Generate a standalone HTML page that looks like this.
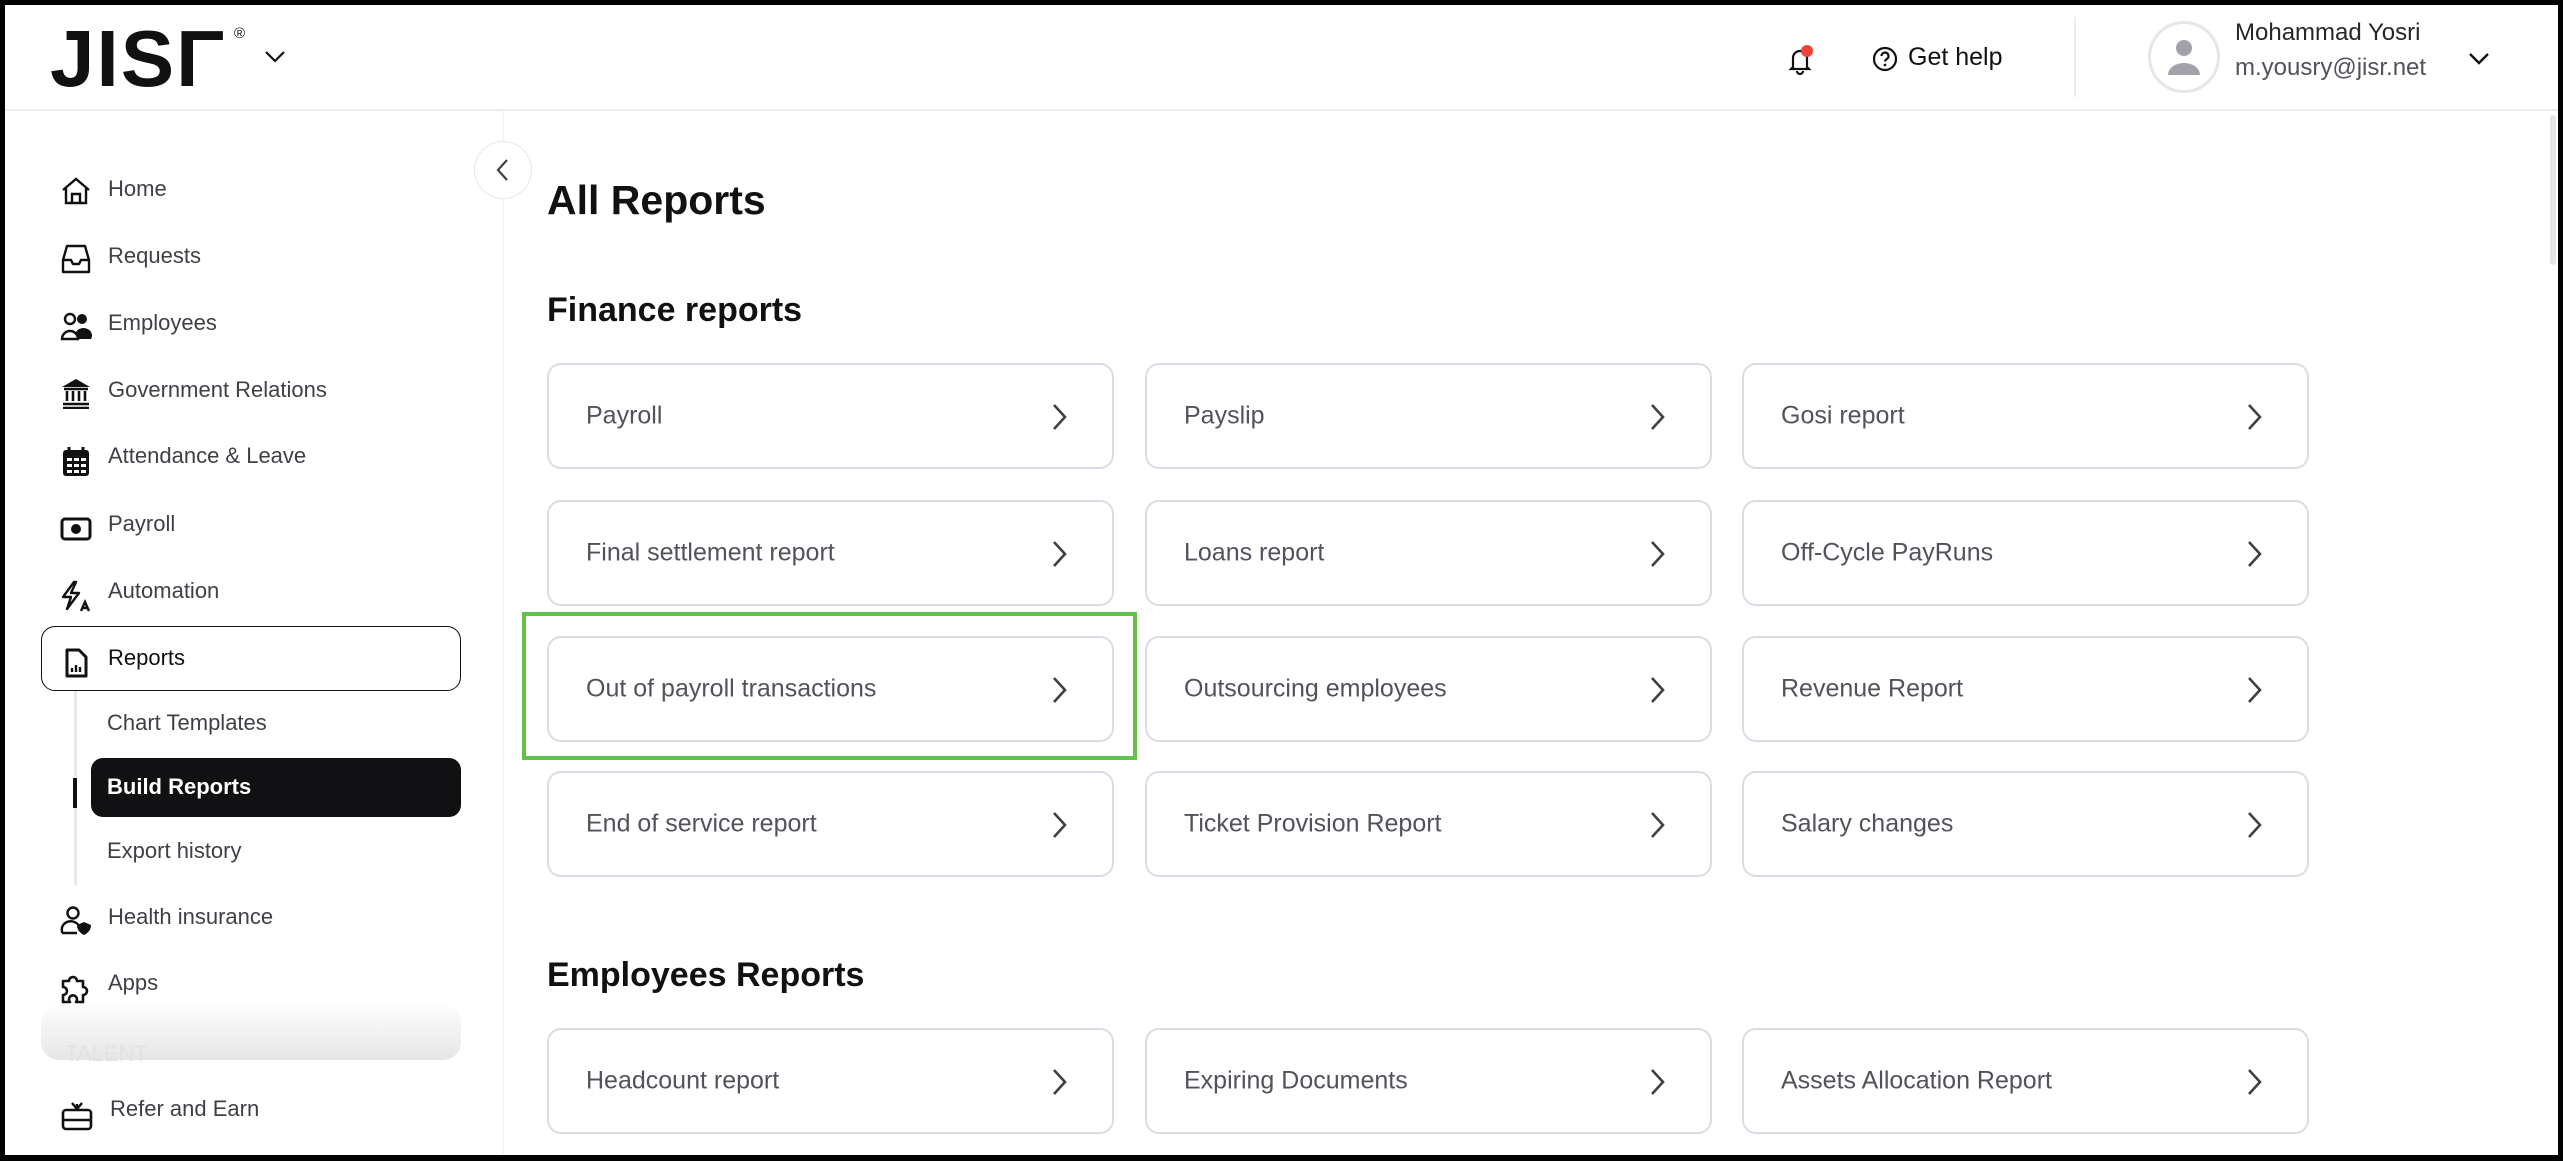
<!DOCTYPE html>
<html><head><meta charset="utf-8"><style>
*{box-sizing:border-box;margin:0;padding:0}
body{width:2563px;height:1161px;overflow:hidden;background:#000;font-family:"Liberation Sans",sans-serif;position:relative}
#page{position:absolute;left:5px;top:5px;width:2553px;height:1150px;background:#fff;overflow:hidden}
.a{position:absolute}
.hdr{left:0;top:0;width:2553px;height:106px;border-bottom:2px solid #ececf0}
.nav{position:absolute;left:103px;font-size:22px;color:#3f3f46;line-height:1;margin-top:-4px}
.ic{position:absolute;left:55px;width:32px;height:32px}
.card{position:absolute;width:567px;height:106px;border:2.5px solid #dcdce6;border-radius:14px;background:#fff}
.card span{position:absolute;left:37px;top:50%;transform:translateY(-50%);font-size:25px;color:#52525b}
.card svg{position:absolute;right:44px;top:38px}
h1{position:absolute;left:542px;top:172px;font-size:41px;font-weight:600;color:#111114}
h2{position:absolute;font-size:34px;font-weight:600;color:#111114;left:542px}
</style></head><body><div id="page">
<div class="a hdr"></div>
<!-- logo -->
<div class="a" style="left:45px;top:14px;font-size:80px;font-weight:700;letter-spacing:2px;color:#111;line-height:1;font-family:'Liberation Sans',sans-serif">JISΓ</div>
<div class="a" style="left:229px;top:20px;font-size:15px;color:#111">®</div>
<svg class="a" style="left:258px;top:44px" width="24" height="16" viewBox="0 0 24 16"><path d="M3 3l9 9 9-9" fill="none" stroke="#111" stroke-width="2.2"/></svg>
<!-- header right -->
<svg class="a" style="left:1780px;top:38px" width="30" height="34" viewBox="0 0 30 34"><path d="M8 24V15a7 7 0 0114 0v9l2 2H6z M12 28a3 3 0 006 0" fill="none" stroke="#111" stroke-width="2.2"/><circle cx="22" cy="8" r="6" fill="#ef4136"/></svg>
<svg class="a" style="left:1866px;top:40px" width="28" height="28" viewBox="0 0 28 28"><circle cx="14" cy="14" r="11" fill="none" stroke="#111" stroke-width="2.2"/><path d="M10.5 11a3.5 3.5 0 116 2.5c-1.5 1-2.5 1.5-2.5 3" fill="none" stroke="#111" stroke-width="2.2"/><circle cx="14" cy="20" r="1.4" fill="#111"/></svg>
<div class="a" style="left:1903px;top:38px;font-size:25px;color:#111">Get help</div>
<div class="a" style="left:2069px;top:12px;width:2px;height:80px;background:#ececf0"></div>
<div class="a" style="left:2143px;top:16px;width:72px;height:72px;border-radius:50%;border:3px solid #e5e5ea;background:#fff"></div>
<svg class="a" style="left:2160px;top:32px" width="38" height="40" viewBox="0 0 38 40"><circle cx="19" cy="11" r="8" fill="#a1a1aa"/><path d="M3 38a16 12 0 0132 0z" fill="#a1a1aa"/></svg>
<div class="a" style="left:2230px;top:14px;font-size:24px;color:#27272a">Mohammad Yosri</div>
<div class="a" style="left:2230px;top:49px;font-size:24px;color:#52525b">m.yousry@jisr.net</div>
<svg class="a" style="left:2462px;top:46px" width="24" height="16" viewBox="0 0 24 16"><path d="M3 3l9 9 9-9" fill="none" stroke="#111" stroke-width="2.4"/></svg>
<!-- scrollbar -->
<div class="a" style="left:2545px;top:110px;width:6px;height:150px;background:#e4e4e7;border-radius:3px"></div>
<!-- sidebar -->
<div class="a" style="left:498px;top:106px;width:1px;height:1044px;background:#f0f0f3"></div>
<div class="a" style="left:469px;top:136px;width:58px;height:58px;border-radius:50%;border:1.5px solid #e6e6ec;background:#fff"></div>
<svg class="a" style="left:488px;top:151px" width="20" height="28" viewBox="0 0 20 28"><path d="M14 4L5 14l9 10" fill="none" stroke="#3f3f46" stroke-width="2.2"/></svg>

<svg class="ic" style="top:170px" viewBox="0 0 32 32"><path d="M3 15L16 4l13 11M6 13v15h20V13M12 28v-9h8v9" fill="none" stroke="#111" stroke-width="2.4"/></svg>
<div class="nav" style="top:177px">Home</div>
<svg class="ic" style="top:238px" viewBox="0 0 32 32"><path d="M7 3h18l4 14v12H3V17zM3 17h8l2 4h6l2-4h8" fill="none" stroke="#111" stroke-width="2.4" stroke-linejoin="round"/></svg>
<div class="nav" style="top:244px">Requests</div>
<svg class="ic" style="top:305px" viewBox="0 0 32 32"><circle cx="10" cy="9" r="5" fill="none" stroke="#111" stroke-width="2.4"/><circle cx="22" cy="9" r="5" fill="#111"/><path d="M2 29a8 8 0 0116 0z" fill="none" stroke="#111" stroke-width="2.4"/><path d="M16 22a8 7 0 0115 7H18z" fill="#111"/></svg>
<div class="nav" style="top:311px">Employees</div>
<svg class="ic" style="top:372px" viewBox="0 0 32 32"><path d="M16 2L2 10h28z" fill="#111"/><path d="M4 12h24M7 14v10M13 14v10M19 14v10M25 14v10M3 27h26M3 31h26" stroke="#111" stroke-width="2.6"/></svg>
<div class="nav" style="top:378px">Government Relations</div>
<svg class="ic" style="top:440px" viewBox="0 0 32 32"><rect x="3" y="5" width="26" height="26" rx="3" fill="#111"/><path d="M9 2v6M23 2v6" stroke="#111" stroke-width="3"/><g fill="#fff"><rect x="7" y="13" width="5" height="3"/><rect x="14" y="13" width="5" height="3"/><rect x="21" y="13" width="5" height="3"/><rect x="7" y="19" width="5" height="3"/><rect x="14" y="19" width="5" height="3"/><rect x="21" y="19" width="5" height="3"/><rect x="7" y="25" width="5" height="3"/><rect x="14" y="25" width="5" height="3"/><rect x="21" y="25" width="5" height="3"/></g></svg>
<div class="nav" style="top:444px">Attendance &amp; Leave</div>
<svg class="ic" style="top:508px" viewBox="0 0 32 32"><rect x="2" y="6" width="28" height="20" rx="3" fill="none" stroke="#111" stroke-width="3"/><circle cx="16" cy="16" r="5" fill="#111"/></svg>
<div class="nav" style="top:512px">Payroll</div>
<svg class="ic" style="top:575px" viewBox="0 0 32 32"><path d="M14 2L3 17h8l-4 12 12-16h-8l5-11z" fill="none" stroke="#111" stroke-width="2.4" stroke-linejoin="round"/><path d="M21 31l4-9 4 9M22.5 28h5" stroke="#111" stroke-width="2.4" fill="none"/></svg>
<div class="nav" style="top:579px">Automation</div>
<div class="a" style="left:36px;top:621px;width:420px;height:65px;border:1.5px solid #111;border-radius:14px"></div>
<svg class="ic" style="top:642px" viewBox="0 0 32 32"><path d="M7 3h12l7 7v19H7z" fill="none" stroke="#111" stroke-width="3" stroke-linejoin="round"/><path d="M12 25v-4M16 25v-7M20 25v-5" stroke="#111" stroke-width="2.4"/></svg>
<div class="nav" style="top:646px;color:#111">Reports</div>
<div class="a" style="left:69px;top:686px;width:3px;height:194px;background:#e9e9ec"></div>
<div class="a" style="left:68px;top:773px;width:4px;height:30px;background:#111"></div>
<div class="nav" style="top:711px;left:102px">Chart Templates</div>
<div class="a" style="left:86px;top:753px;width:370px;height:59px;background:#111114;border-radius:12px"></div>
<div class="nav" style="top:775px;left:102px;color:#fff;font-weight:700">Build Reports</div>
<div class="nav" style="top:839px;left:102px">Export history</div>
<svg class="ic" style="top:900px" viewBox="0 0 32 32"><circle cx="13" cy="8" r="5.5" fill="none" stroke="#111" stroke-width="2.4"/><path d="M2 28v-2a9 8 0 0117-5M2 28h15" fill="none" stroke="#111" stroke-width="2.4"/><path d="M24 17l7 3c0 5-3 8-7 10-4-2-7-5-7-10z" fill="#111"/></svg>
<div class="nav" style="top:905px">Health insurance</div>
<svg class="ic" style="top:967px" viewBox="0 0 32 32"><path d="M3 9h6a4 4 0 118 0h6v6a4 4 0 110 8v7h-7a4 4 0 10-6 0H3v-7a4 4 0 100-8z" fill="none" stroke="#111" stroke-width="2.6" stroke-linejoin="round"/></svg>
<div class="nav" style="top:971px">Apps</div>
<div class="a" style="left:36px;top:1000px;width:420px;height:55px;border-radius:18px;background:linear-gradient(#fdfdfd,#e6e6e8)"></div>
<div class="a" style="left:60px;top:1036px;font-size:22px;color:#e2e2e4">TALENT</div>
<svg class="ic" style="top:1094px;left:56px" viewBox="0 0 32 32"><rect x="2" y="11" width="28" height="19" rx="3" fill="none" stroke="#111" stroke-width="2.6"/><path d="M2 21h28M11 4l5 6 5-6M16 10V5" fill="none" stroke="#111" stroke-width="2.4"/></svg>
<div class="nav" style="top:1097px;left:105px">Refer and Earn</div>

<!-- main -->
<h1>All Reports</h1>
<h2 style="top:286px">Finance reports</h2>
<h2 style="top:951px">Employees Reports</h2>
<div class="a" style="left:517px;top:607px;width:615px;height:148px;border:4px solid #62c24a"></div>

<div class="card" style="left:542px;top:358px"><span>Payroll</span><svg width="16" height="28" viewBox="0 0 16 28"><path d="M2 2l11 12L2 26" fill="none" stroke="#3f3f46" stroke-width="2.6"/></svg></div>
<div class="card" style="left:1140px;top:358px"><span>Payslip</span><svg width="16" height="28" viewBox="0 0 16 28"><path d="M2 2l11 12L2 26" fill="none" stroke="#3f3f46" stroke-width="2.6"/></svg></div>
<div class="card" style="left:1737px;top:358px"><span>Gosi report</span><svg width="16" height="28" viewBox="0 0 16 28"><path d="M2 2l11 12L2 26" fill="none" stroke="#3f3f46" stroke-width="2.6"/></svg></div>

<div class="card" style="left:542px;top:495px"><span>Final settlement report</span><svg width="16" height="28" viewBox="0 0 16 28"><path d="M2 2l11 12L2 26" fill="none" stroke="#3f3f46" stroke-width="2.6"/></svg></div>
<div class="card" style="left:1140px;top:495px"><span>Loans report</span><svg width="16" height="28" viewBox="0 0 16 28"><path d="M2 2l11 12L2 26" fill="none" stroke="#3f3f46" stroke-width="2.6"/></svg></div>
<div class="card" style="left:1737px;top:495px"><span>Off-Cycle PayRuns</span><svg width="16" height="28" viewBox="0 0 16 28"><path d="M2 2l11 12L2 26" fill="none" stroke="#3f3f46" stroke-width="2.6"/></svg></div>

<div class="card" style="left:542px;top:631px"><span>Out of payroll transactions</span><svg width="16" height="28" viewBox="0 0 16 28"><path d="M2 2l11 12L2 26" fill="none" stroke="#3f3f46" stroke-width="2.6"/></svg></div>
<div class="card" style="left:1140px;top:631px"><span>Outsourcing employees</span><svg width="16" height="28" viewBox="0 0 16 28"><path d="M2 2l11 12L2 26" fill="none" stroke="#3f3f46" stroke-width="2.6"/></svg></div>
<div class="card" style="left:1737px;top:631px"><span>Revenue Report</span><svg width="16" height="28" viewBox="0 0 16 28"><path d="M2 2l11 12L2 26" fill="none" stroke="#3f3f46" stroke-width="2.6"/></svg></div>

<div class="card" style="left:542px;top:766px"><span>End of service report</span><svg width="16" height="28" viewBox="0 0 16 28"><path d="M2 2l11 12L2 26" fill="none" stroke="#3f3f46" stroke-width="2.6"/></svg></div>
<div class="card" style="left:1140px;top:766px"><span>Ticket Provision Report</span><svg width="16" height="28" viewBox="0 0 16 28"><path d="M2 2l11 12L2 26" fill="none" stroke="#3f3f46" stroke-width="2.6"/></svg></div>
<div class="card" style="left:1737px;top:766px"><span>Salary changes</span><svg width="16" height="28" viewBox="0 0 16 28"><path d="M2 2l11 12L2 26" fill="none" stroke="#3f3f46" stroke-width="2.6"/></svg></div>

<div class="card" style="left:542px;top:1023px"><span>Headcount report</span><svg width="16" height="28" viewBox="0 0 16 28"><path d="M2 2l11 12L2 26" fill="none" stroke="#3f3f46" stroke-width="2.6"/></svg></div>
<div class="card" style="left:1140px;top:1023px"><span>Expiring Documents</span><svg width="16" height="28" viewBox="0 0 16 28"><path d="M2 2l11 12L2 26" fill="none" stroke="#3f3f46" stroke-width="2.6"/></svg></div>
<div class="card" style="left:1737px;top:1023px"><span>Assets Allocation Report</span><svg width="16" height="28" viewBox="0 0 16 28"><path d="M2 2l11 12L2 26" fill="none" stroke="#3f3f46" stroke-width="2.6"/></svg></div>
</div></body></html>
